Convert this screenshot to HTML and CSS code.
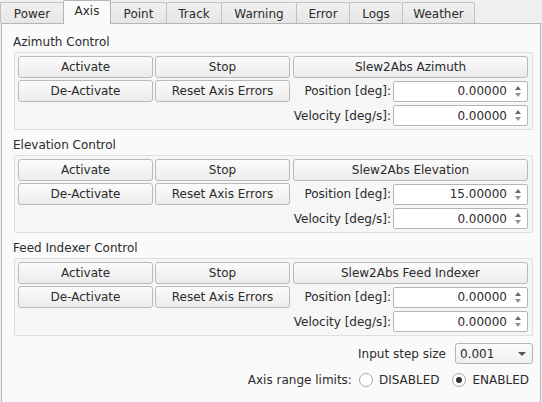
FILE: index.html
```html
<!DOCTYPE html>
<html>
<head>
<meta charset="utf-8">
<link rel="stylesheet" href="styles.css">
</head>
<body>
<div class="tabbar">
  <div class="tab w-power">Power</div>
  <div class="tab sel w-axis">Axis</div>
  <div class="tab w-point">Point</div>
  <div class="tab w-track">Track</div>
  <div class="tab w-warning">Warning</div>
  <div class="tab w-error">Error</div>
  <div class="tab w-logs">Logs</div>
  <div class="tab last w-weather">Weather</div>
</div>
<div class="panel">
  <div class="group">
    <div class="glabel">Azimuth Control</div>
    <div class="frame">
      <button class="btn c1">Activate</button>
      <button class="btn c2">Stop</button>
      <button class="btn c3">Slew2Abs Azimuth</button>
      <button class="btn c1">De-Activate</button>
      <button class="btn c2">Reset Axis Errors</button>
      <div class="field"><span class="flabel">Position [deg]:</span><div class="spin"><span class="val">0.00000</span><span class="arrows"><i class="up"></i><i class="dn"></i></span></div></div>
      <div class="field r3"><span class="flabel">Velocity [deg/s]:</span><div class="spin"><span class="val">0.00000</span><span class="arrows"><i class="up"></i><i class="dn"></i></span></div></div>
    </div>
  </div>
  <div class="group">
    <div class="glabel">Elevation Control</div>
    <div class="frame">
      <button class="btn c1">Activate</button>
      <button class="btn c2">Stop</button>
      <button class="btn c3">Slew2Abs Elevation</button>
      <button class="btn c1">De-Activate</button>
      <button class="btn c2">Reset Axis Errors</button>
      <div class="field"><span class="flabel">Position [deg]:</span><div class="spin"><span class="val">15.00000</span><span class="arrows"><i class="up"></i><i class="dn"></i></span></div></div>
      <div class="field r3"><span class="flabel">Velocity [deg/s]:</span><div class="spin"><span class="val">0.00000</span><span class="arrows"><i class="up"></i><i class="dn"></i></span></div></div>
    </div>
  </div>
  <div class="group">
    <div class="glabel">Feed Indexer Control</div>
    <div class="frame">
      <button class="btn c1">Activate</button>
      <button class="btn c2">Stop</button>
      <button class="btn c3">Slew2Abs Feed Indexer</button>
      <button class="btn c1">De-Activate</button>
      <button class="btn c2">Reset Axis Errors</button>
      <div class="field"><span class="flabel">Position [deg]:</span><div class="spin"><span class="val">0.00000</span><span class="arrows"><i class="up"></i><i class="dn"></i></span></div></div>
      <div class="field r3"><span class="flabel">Velocity [deg/s]:</span><div class="spin"><span class="val">0.00000</span><span class="arrows"><i class="up"></i><i class="dn"></i></span></div></div>
    </div>
  </div>
  <div class="steprow">
    <span>Input step size</span>
    <div class="combo"><span>0.001</span><i class="carrow"></i></div>
  </div>
  <div class="radiorow">
    <span>Axis range limits:</span>
    <label class="radio"><i class="circ"></i>DISABLED</label>
    <label class="radio"><i class="circ on"></i>ENABLED</label>
  </div>
</div>
</body>
</html>
```
FILE: styles.css
```css
* { box-sizing: border-box; }
html, body { margin: 0; padding: 0; }
body {
  width: 542px;
  height: 402px;
  overflow: hidden;
  background: #efefef;
  font-family: "DejaVu Sans", sans-serif;
  font-size: 12px;
  color: #2b2b2b;
}
.tabbar {
  display: flex;
  align-items: flex-end;
  height: 23px;
}
.tab {
  height: 21px;
  border: 1px solid #c2c2c2;
  border-right: none;
  border-bottom: none;
  border-radius: 2px 2px 0 0;
  background: linear-gradient(#f0f0f0, #e6e6e6);
  display: flex;
  align-items: center;
  justify-content: center;
  padding-top: 1px;
}
.tab.last { border-right: 1px solid #c2c2c2; }
.tab.sel {
  height: 24px;
  margin-bottom: -1px;
  background: #fafafa;
  border: 1px solid #b5b5b5;
  border-bottom: none;
  position: relative;
  z-index: 1;
  padding-top: 0;
  padding-bottom: 3px;
}
.tab.sel + .tab { border-left: none; }
.w-power { width: 63px; }
.w-axis { width: 48px; }
.w-point { width: 55px; }
.w-track { width: 55px; }
.w-warning { width: 75px; }
.w-error { width: 53px; }
.w-logs { width: 53px; }
.w-weather { width: 73px; }

.panel {
  margin-left: 1px;
  width: 540px;
  height: 390px;
  background: #fafafa;
  border: 1px solid #b5b5b5;
  border-bottom: none;
  padding: 3px 0 0 11px;
}
.glabel {
  height: 25px;
  line-height: 20px;
  padding-top: 5px;
}
.frame {
  width: 519px;
  margin-left: 1px;
  border: 1px solid #dedede;
  border-radius: 2px;
  background: #f6f6f6;
  padding: 3px;
  display: grid;
  grid-template-columns: 137px 138px 235px;
  grid-template-rows: 22px 22px 22px;
  row-gap: 2px;
}
.btn {
  font-family: inherit;
  font-size: 12px;
  color: #2b2b2b;
  height: 22px;
  margin: 0;
  padding: 0;
  border: 1px solid #b9b9b9;
  border-radius: 3px;
  background: linear-gradient(#fbfbfb, #ececec);
}
.c1, .c2 { width: 135px; }
.c3 { width: 235px; }
.field {
  grid-column: 3;
  display: flex;
  align-items: center;
  justify-content: flex-end;
  gap: 2px;
}
.r3 { grid-row: 3; margin-top: 1px; }
.spin {
  width: 135px;
  height: 21px;
  background: #fff;
  border: 1px solid #b5b5b5;
  border-radius: 2px;
  display: flex;
  align-items: center;
  justify-content: flex-end;
}
.val { padding-right: 4px; }
.arrows {
  width: 16px;
  height: 100%;
  display: flex;
  flex-direction: column;
  align-items: center;
  justify-content: center;
  gap: 3px;
  padding-right: 2px;
}
.up, .dn {
  width: 0; height: 0;
  border-left: 3px solid transparent;
  border-right: 3px solid transparent;
}
.up { border-bottom: 4px solid #6a6a6a; }
.dn { border-top: 4px solid #8f8f8f; }

.steprow {
  display: flex;
  justify-content: flex-end;
  align-items: center;
  gap: 9px;
  width: 520px;
  margin-top: 7px;
  height: 21px;
}
.combo {
  width: 78px;
  height: 21px;
  border: 1px solid #b5b5b5;
  border-radius: 3px;
  background: linear-gradient(#fbfbfb, #efefef);
  display: flex;
  align-items: center;
  justify-content: space-between;
  padding: 0 6px 0 4px;
}
.carrow {
  width: 0; height: 0;
  border-left: 4px solid transparent;
  border-right: 4px solid transparent;
  border-top: 4px solid #555;
}
.radiorow {
  display: flex;
  justify-content: flex-end;
  align-items: center;
  width: 516px;
  height: 18px;
  margin-top: 7px;
}
.radio {
  display: flex;
  align-items: center;
  margin-left: 7px;
}
.radio + .radio { margin-left: 13px; }
.circ {
  width: 14px;
  height: 14px;
  border: 1px solid #a5a5a5;
  border-radius: 50%;
  background: #fff;
  margin-right: 6px;
  display: flex;
  align-items: center;
  justify-content: center;
}
.circ.on::after {
  content: "";
  width: 6px;
  height: 6px;
  border-radius: 50%;
  background: #333;
}
```
